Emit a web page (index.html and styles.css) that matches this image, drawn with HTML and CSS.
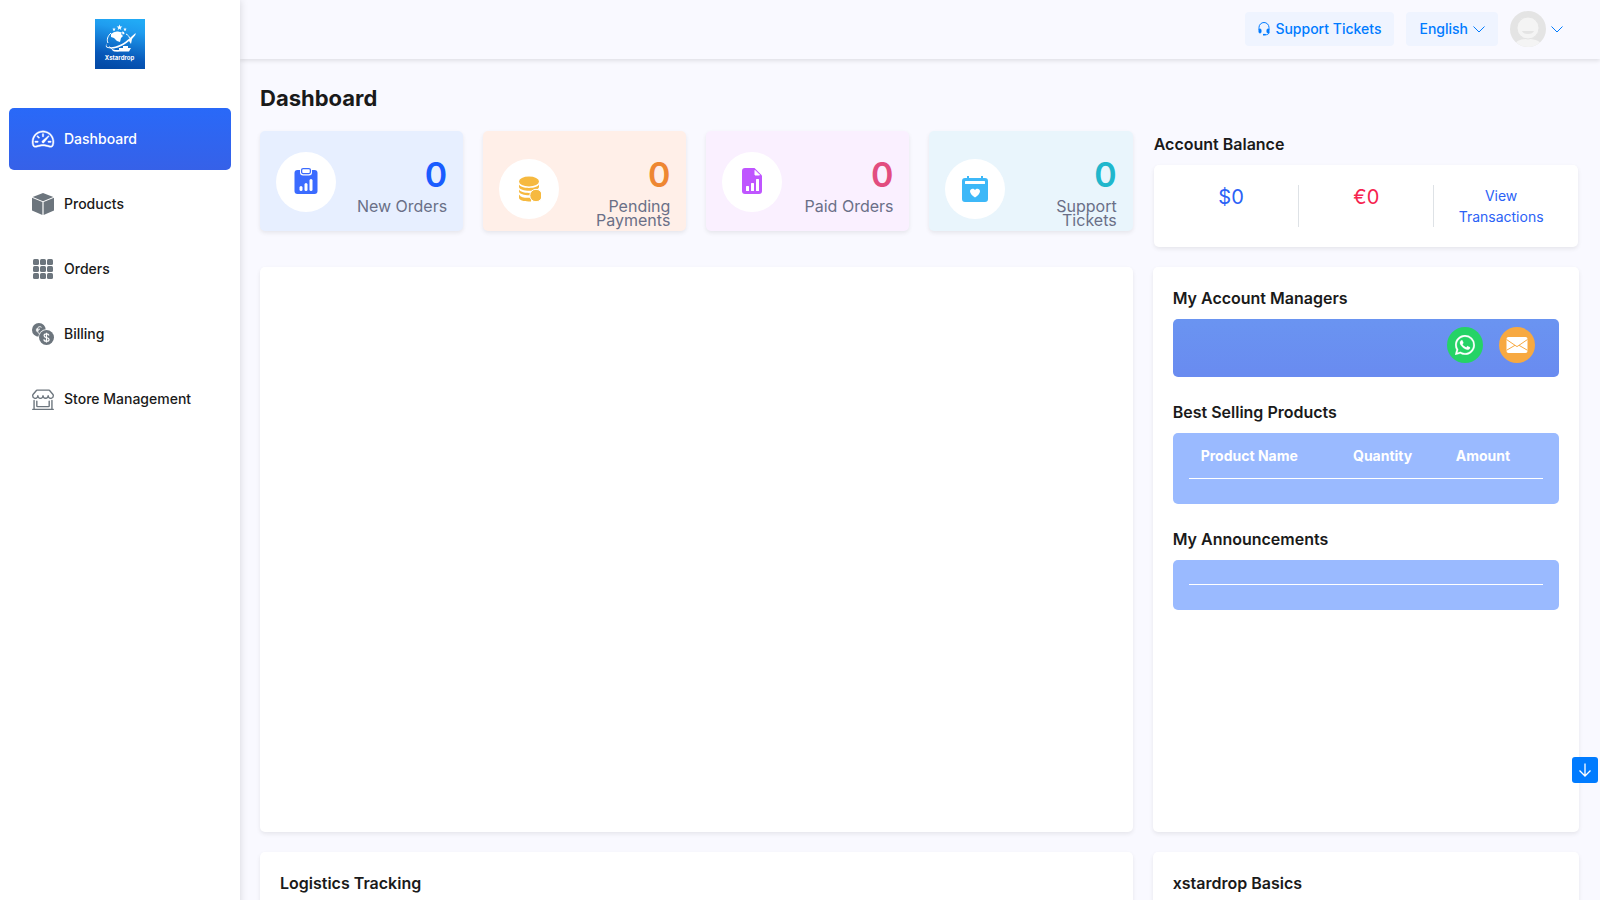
FILE: index.html
```html
<!DOCTYPE html>
<html lang="en">

<head>
    <meta charset="UTF-8">
    <meta name="viewport" content="width=device-width, initial-scale=1.0">
    <title>Xstardrop - Dashboard</title>
    <link rel="stylesheet" href="styles.css">
</head>

<body>
    <aside class="sidebar">
        <a href="#" class="logo" aria-label="Xstardrop">
            <svg width="50" height="50" viewBox="0 0 50 50">
                <defs>
                    <linearGradient id="logo-bg" x1="0.6" y1="0" x2="0.4" y2="1">
                        <stop offset="0" stop-color="#21aaf5" />
                        <stop offset="0.2" stop-color="#1f9cef" />
                        <stop offset="0.75" stop-color="#0757b8" />
                        <stop offset="1" stop-color="#034aa6" />
                    </linearGradient>
                </defs>
                <rect width="50" height="50" fill="url(#logo-bg)" />
                <g fill="#fff">
                    <path d="M24.500 5.500l.8 2 2.100.1-1.700 1.300.6 2.100-1.800-1.200-1.800 1.200.6-2.100-1.700-1.300 2.100-.1z" />
                    <path d="M19 8.500l.5 1.200 1.300.1-1 .8.300 1.300-1.100-.7-1.100.7.300-1.300-1-.8 1.300-.1zM30 8.500l.5 1.200 1.300.1-1 .8.300 1.300-1.100-.7-1.100.7.300-1.300-1-.8 1.300-.1z" />
                    <path d="M16 15q3-3 7-2.500l4 1-1 1.500 2 2-2 2-1 4-3-1-3-3-3-1zM27 12.500l2 .5.500 2-2 .5z" />
                    <path d="M12 24c-2 4 1 5 6 4 7-1 14-6 18-10l4-3.500c1-.8.8.8 0 2l-3 3.500-1 5-2-3c-6 5-13 8-18 7.500-5-.2-6.500-2-4-5.500z" />
                    <path d="M24 29h4v-2h5v2h3l-2 3.500H19l-2-1.500h7z" />
                </g>
                <path d="M16 14c-3.500 3-4.500 7-3 10M14.500 27.500c2 3 5 4.500 9 4.500M31 15c2 1 3 2 3.500 4" fill="none" stroke="#fff" stroke-width="1" />
                <text x="24.500" y="41" text-anchor="middle" class="logo-text">Xstardrop</text>
            </svg>
        </a>
        <nav class="menu">
            <a href="#" class="menu-item active">
                <svg width="22" height="22" viewBox="0 0 16 16" fill="currentColor" fill-rule="evenodd" stroke="currentColor" stroke-width="0.300">
                    <path d="M8 4a.5.5 0 0 1 .5.5V6a.5.5 0 0 1-1 0V4.500A.5.5 0 0 1 8 4zM3.732 5.732a.5.5 0 0 1 .707 0l.915.914a.5.5 0 1 1-.708.708l-.914-.915a.5.5 0 0 1 0-.707zM2 10a.5.5 0 0 1 .5-.5h1.586a.5.5 0 0 1 0 1H2.500A.5.5 0 0 1 2 10zm9.500 0a.5.5 0 0 1 .5-.5h1.500a.5.5 0 0 1 0 1H12a.5.5 0 0 1-.5-.5zm.754-4.246a.389.389 0 0 0-.527-.02L7.547 9.310a.91.91 0 1 0 1.302 1.258l3.434-4.297a.389.389 0 0 0-.029-.518z" />
                    <path d="M0 10a8 8 0 1 1 15.547 2.661c-.442 1.253-1.845 1.602-2.932 1.250C11.309 13.488 9.475 13 8 13c-1.474 0-3.310.488-4.615.911-1.087.352-2.490.003-2.932-1.250A7.988 7.988 0 0 1 0 10zm8-7a7 7 0 0 0-6.603 9.329c.203.575.923.876 1.680.63C4.397 12.533 6.358 12 8 12s3.604.532 4.923.96c.757.245 1.477-.056 1.680-.631A7 7 0 0 0 8 3z" />
                </svg>
                Dashboard
            </a>
            <a href="#" class="menu-item">
                <svg width="22" height="22" viewBox="0 0 22 22" fill="currentColor">
                    <path d="M11 0L21.300 4 11 8.200.7 4z" />
                    <path d="M0 4.800L10.400 9v13L0 17.600zM22 4.800L11.600 9v13L22 17.600z" />
                </svg>
                Products
            </a>
            <a href="#" class="menu-item">
                <svg width="22" height="22" viewBox="0 0 22 22" fill="currentColor">
                    <rect x="1" y="1" width="6" height="6" rx="1.500" />
                    <rect x="8" y="1" width="6" height="6" rx="1.500" />
                    <rect x="15" y="1" width="6" height="6" rx="1.500" />
                    <rect x="1" y="8" width="6" height="6" rx="1.500" />
                    <rect x="8" y="8" width="6" height="6" rx="1.500" />
                    <rect x="15" y="8" width="6" height="6" rx="1.500" />
                    <rect x="1" y="15" width="6" height="6" rx="1.500" />
                    <rect x="8" y="15" width="6" height="6" rx="1.500" />
                    <rect x="15" y="15" width="6" height="6" rx="1.500" />
                </svg>
                Orders
            </a>
            <a href="#" class="menu-item">
                <svg width="22" height="22" viewBox="0 0 22 22">
                    <circle cx="6.900" cy="6.900" r="6.900" fill="currentColor" />
                    <path d="M9.500 4.300C7.500 2.900 5.300 4 5.100 7c.1 2 .8 3 2.200 3.200M3.900 6.200h4M3.900 7.800h3" fill="none" stroke="#fff" stroke-width="1" />
                    <circle cx="14.500" cy="14.500" r="8.300" fill="#fff" />
                    <circle cx="14.500" cy="14.500" r="7.500" fill="currentColor" />
                    <path d="M17 12.500c-.3-1.200-1.300-1.600-2.500-1.600-1.400 0-2.400.7-2.400 1.800 0 2.500 5 1.200 5 3.800 0 1.200-1.100 1.900-2.600 1.900-1.400 0-2.500-.6-2.700-2M14.500 9.700v9.800" fill="none" stroke="#fff" stroke-width="1.200" />
                </svg>
                Billing
            </a>
            <a href="#" class="menu-item">
                <svg width="22" height="22" viewBox="0 0 16 16" fill="currentColor">
                    <path d="M2.970 1.350A1 1 0 0 1 3.730 1h8.540a1 1 0 0 1 .76.35l2.609 3.044A1.500 1.500 0 0 1 16 5.370v.255a2.375 2.375 0 0 1-4.250 1.458A2.371 2.371 0 0 1 9.875 8 2.370 2.370 0 0 1 8 7.083 2.370 2.370 0 0 1 6.125 8a2.370 2.370 0 0 1-1.875-.917A2.375 2.375 0 0 1 0 5.625V5.370a1.500 1.500 0 0 1 .361-.976l2.610-3.045zm1.780 4.275a1.375 1.375 0 0 0 2.750 0 .5.5 0 0 1 1 0 1.375 1.375 0 0 0 2.750 0 .5.5 0 0 1 1 0 1.375 1.375 0 1 0 2.750 0V5.370a.5.5 0 0 0-.12-.325L12.270 2H3.730L1.120 5.045A.5.5 0 0 0 1 5.370v.255a1.375 1.375 0 0 0 2.750 0 .5.5 0 0 1 1 0zM1.500 8.500A.5.5 0 0 1 2 9v6h12V9a.5.5 0 0 1 1 0v6h.5a.5.5 0 0 1 0 1H.5a.5.5 0 0 1 0-1H1V9a.5.5 0 0 1 .5-.5zm2 .5a.5.5 0 0 1 .5.5V13h8V9.500a.5.5 0 0 1 1 0V13a1 1 0 0 1-1 1H4a1 1 0 0 1-1-1V9.500a.5.5 0 0 1 .5-.5z" />
                </svg>
                Store Management
            </a>
        </nav>
    </aside>

    <div class="page">
        <header class="topbar">
            <a href="#" class="top-btn">
                <svg width="12" height="14" viewBox="0 0 12 14" fill="none" stroke="currentColor">
                    <path d="M1 8V5.500a5 5 0 0 1 10 0V8M11 10c0 1.700-1 2.700-2.500 2.700H7" />
                    <rect x="1" y="7" width="2" height="4" rx="1" fill="currentColor" />
                    <rect x="9" y="7" width="2" height="4" rx="1" fill="currentColor" />
                    <path d="M5 12.700h2.500" stroke-width="1.600" />
                </svg>
                Support Tickets
            </a>
            <button type="button" class="top-btn">
                English
                <svg width="12" height="12" viewBox="0 0 12 12" fill="none" stroke="currentColor">
                    <path d="M.5 3.500L6 9l5.500-5.500" />
                </svg>
            </button>
            <button type="button" class="user-btn" aria-label="Account">
                <svg width="36" height="36" viewBox="0 0 36 36">
                    <defs>
                        <clipPath id="avatar-clip">
                            <circle cx="18" cy="18" r="18" />
                        </clipPath>
                    </defs>
                    <g clip-path="url(#avatar-clip)">
                        <rect width="36" height="36" fill="#e4e4e4" />
                        <path d="M4 36c1-6 6-8 14-8s13 2 14 8z" fill="#f4f4f4" />
                        <circle cx="18" cy="17" r="11" fill="#f4f4f4" stroke="#e4e4e4" />
                        <path d="M12 20h12c-1 4-11 4-12 0z" fill="#e4e4e4" />
                    </g>
                </svg>
                <svg width="12" height="12" viewBox="0 0 12 12" fill="none" stroke="currentColor">
                    <path d="M.5 3.500L6 9l5.500-5.500" />
                </svg>
            </button>
        </header>

        <main class="content">
            <h1>Dashboard</h1>
            <div class="grid">
                <section class="stats">
                    <a href="#" class="stat stat-new">
                        <span class="stat-icon">
                            <svg width="26" height="30" viewBox="0 0 26 30">
                                <rect x="1.500" y="3" width="23" height="24" rx="3" fill="#3b6bff" />
                                <rect x="7" y="0" width="12" height="8.500" rx="3" fill="#fff" />
                                <rect x="8.600" y="1.600" width="8.800" height="5" rx="1.500" fill="none" stroke="#3b6bff" stroke-width="1.300" />
                                <g fill="#fff">
                                    <rect x="6.500" y="19" width="3" height="5" rx="1.500" />
                                    <rect x="11.500" y="16" width="3" height="8" rx="1.500" />
                                    <rect x="16.500" y="12" width="3" height="12" rx="1.500" />
                                </g>
                            </svg>
                        </span>
                        <span class="stat-text">
                            <span class="stat-number">0</span>
                            <span class="stat-label">New Orders</span>
                        </span>
                    </a>
                    <a href="#" class="stat stat-pending">
                        <span class="stat-icon">
                            <svg width="24" height="26" viewBox="0 0 24 26" fill="#f6b93f">
                                <ellipse cx="12" cy="5.500" rx="10" ry="5" />
                                <path d="M2 8.500c2 4.500 18 4.500 20 0v2.500c-1 5-19 5-20 0z" />
                                <path d="M2 13.500c2 4.500 18 4.500 20 0v2c-1 5-19 5-20 0z" />
                                <path d="M2 18.500c2 3.500 7 3.500 12 3.200v3.800c-6 0-12-.5-12-4z" />
                                <circle cx="19" cy="19.500" r="6.200" stroke="#fff" />
                            </svg>
                        </span>
                        <span class="stat-text">
                            <span class="stat-number">0</span>
                            <span class="stat-label">Pending Payments</span>
                        </span>
                    </a>
                    <a href="#" class="stat stat-paid">
                        <span class="stat-icon">
                            <svg width="20" height="28" viewBox="0 0 20 28">
                                <path d="M3 0h9.500L20 7.500V23a3 3 0 0 1-3 3H3a3 3 0 0 1-3-3V3a3 3 0 0 1 3-3z" fill="#bf55ff" />
                                <path d="M13 2.500V7h4.500z" fill="#fff" stroke="#fff" stroke-linejoin="round" />
                                <g fill="#fff">
                                    <rect x="4" y="18" width="3" height="5" rx="0.500" />
                                    <rect x="9" y="15" width="3" height="8" rx="0.500" />
                                    <rect x="14" y="11" width="3" height="12" rx="0.500" />
                                </g>
                            </svg>
                        </span>
                        <span class="stat-text">
                            <span class="stat-number">0</span>
                            <span class="stat-label">Paid Orders</span>
                        </span>
                    </a>
                    <a href="#" class="stat stat-support">
                        <span class="stat-icon">
                            <svg width="26" height="28" viewBox="0 0 26 28">
                                <path d="M5 1h2v2h12V1h2v2h2a3 3 0 0 1 3 3v18a3 3 0 0 1-3 3H3a3 3 0 0 1-3-3V6a3 3 0 0 1 3-3h2z" fill="#3db8f8" />
                                <rect x="3" y="6" width="20" height="3" rx="0.500" fill="#fff" />
                                <path d="M13 22.500c-3-2-5-4-5-6.200 0-3 3.700-3.400 5-1.300 1.300-2.100 5-1.700 5 1.300 0 2.200-2 4.200-5 6.200z" fill="#fff" />
                            </svg>
                        </span>
                        <span class="stat-text">
                            <span class="stat-number">0</span>
                            <span class="stat-label">Support Tickets</span>
                        </span>
                    </a>
                </section>

                <section class="balance">
                    <h2>Account Balance</h2>
                    <div class="balance-card">
                        <div class="balance-cell usd">$0</div>
                        <div class="balance-cell eur">€0</div>
                        <div class="balance-cell"><a href="#">View Transactions</a></div>
                    </div>
                </section>

                <section class="card chart-card"></section>

                <section class="card side-card">
                    <h2>My Account Managers</h2>
                    <div class="manager-box">
                        <a href="#" class="round-btn whatsapp" aria-label="WhatsApp">
                            <svg width="20" height="20" viewBox="0 0 16 16" fill="currentColor" stroke="currentColor" stroke-width="0.200">
                                <path d="M13.601 2.326A7.854 7.854 0 0 0 7.994 0C3.627 0 .068 3.558.064 7.926c0 1.399.366 2.760 1.057 3.965L0 16l4.204-1.102a7.933 7.933 0 0 0 3.790.965h.004c4.368 0 7.926-3.558 7.930-7.930A7.898 7.898 0 0 0 13.600 2.326zM7.994 14.521a6.573 6.573 0 0 1-3.356-.92l-.24-.144-2.494.654.666-2.433-.156-.251a6.560 6.560 0 0 1-1.007-3.505c0-3.626 2.957-6.584 6.591-6.584a6.560 6.560 0 0 1 4.660 1.931 6.557 6.557 0 0 1 1.928 4.660c-.004 3.639-2.961 6.592-6.592 6.592zm3.615-4.934c-.197-.099-1.170-.578-1.353-.646-.182-.065-.315-.099-.445.099-.133.197-.513.646-.627.775-.114.133-.232.148-.43.05-.197-.1-.836-.308-1.592-.985-.59-.525-.985-1.175-1.103-1.372-.114-.198-.011-.304.088-.403.087-.088.197-.232.296-.346.1-.114.133-.198.198-.33.065-.134.034-.248-.015-.347-.05-.099-.445-1.076-.612-1.470-.16-.389-.323-.335-.445-.34-.114-.007-.247-.007-.38-.007a.729.729 0 0 0-.529.247c-.182.198-.691.677-.691 1.654 0 .977.71 1.916.81 2.049.098.133 1.394 2.132 3.383 2.992.47.205.84.326 1.129.418.475.152.904.129 1.246.08.38-.058 1.171-.48 1.338-.943.164-.464.164-.86.114-.943-.049-.084-.182-.133-.38-.232z" />
                            </svg>
                        </a>
                        <a href="#" class="round-btn mail" aria-label="E-mail">
                            <svg width="22" height="16" viewBox="0 0 22 16">
                                <rect x="0.500" width="21" height="16" rx="2" fill="#fff" />
                                <path d="M.5 2.500L9 8.300.5 13.300M21.500 2.500L13 8.300l8.500 5M9 8.300l2 1.300 2-1.300" fill="none" stroke="#f7a941" stroke-width="1" />
                            </svg>
                        </a>
                    </div>

                    <h2>Best Selling Products</h2>
                    <div class="light-box">
                        <table>
                            <thead>
                                <tr>
                                    <th class="col-name">Product Name</th>
                                    <th class="col-qty">Quantity</th>
                                    <th class="col-amount">Amount</th>
                                </tr>
                            </thead>
                            <tbody></tbody>
                        </table>
                    </div>

                    <h2>My Announcements</h2>
                    <div class="light-box">
                        <div class="announcements"></div>
                    </div>
                </section>

                <section class="card bottom-left">
                    <h2>Logistics Tracking</h2>
                </section>
                <section class="card bottom-right">
                    <h2>xstardrop Basics</h2>
                </section>
            </div>
        </main>
    </div>

    <button type="button" class="scroll-btn" aria-label="Scroll down">
        <svg width="14" height="14" viewBox="0 0 14 14" fill="none" stroke="currentColor" stroke-width="1.300">
            <path d="M7 .5V13M1.500 7.500L7 13l5.500-5.500" />
        </svg>
    </button>
</body>

</html>
```

FILE: styles.css
```css
* {
    box-sizing: border-box;
}

body {
    display: flex;
    min-height: 100vh;
    margin: 0;
    background-color: #f9f9ff;
    font-family: Inter, "Liberation Sans", sans-serif;
    font-size: 14px;
    line-height: 21px;
    color: #1a1a1a;
}

a {
    text-decoration: none;
}

button {
    border: none;
    padding: 0;
    font: inherit;
    cursor: pointer;
}

h1 {
    margin: 0 0 16px;
    font-size: 22px;
    line-height: 34px;
    font-weight: 700;
}

h2 {
    margin: 0 0 10px;
    font-size: 16px;
    line-height: 22px;
    font-weight: 600;
}

/* sidebar */
.sidebar {
    flex: 0 0 240px;
    padding: 19px 9px;
    background-color: #fff;
    box-shadow: 0 0 8px rgba(0, 0, 0, 0.15);
    z-index: 2;
}

.logo {
    display: flex;
    justify-content: center;
    margin-bottom: 39px;
}

.logo-text {
    font-size: 6px;
    font-weight: 700;
    fill: #fff;
}

.menu {
    display: flex;
    flex-direction: column;
    gap: 3px;
}

.menu-item {
    display: flex;
    align-items: center;
    gap: 10px;
    height: 62px;
    padding: 0 23px;
    border-radius: 5px;
    font-weight: 500;
    line-height: 22px;
    color: #1a1a1a;
}

.menu-item svg {
    color: #6c757d;
}

.menu-item.active {
    background: linear-gradient(#2969f8, #3661e8);
    color: #fff;
}

.menu-item.active svg {
    color: #fff;
    overflow: visible;
}

/* top bar */
.page {
    flex: 1;
    min-width: 0;
}

.topbar {
    display: flex;
    justify-content: flex-end;
    align-items: center;
    gap: 12px;
    height: 59px;
    padding: 0 37px 1px;
    box-shadow: 0 2px 4px rgba(0, 0, 0, 0.1);
}

.top-btn {
    display: flex;
    align-items: center;
    gap: 5px;
    height: 34px;
    padding: 0 13px;
    border-radius: 4px;
    background-color: #eff4ff;
    font-weight: 500;
    line-height: 20px;
    color: #007bff;
}

.user-btn {
    display: flex;
    align-items: center;
    gap: 5px;
    background: none;
    color: #007bff;
}

/* content */
.content {
    padding: 22px 21px 20px 20px;
}

.grid {
    display: grid;
    grid-template-columns: repeat(12, minmax(0, 1fr));
    column-gap: 20px;
}

.stats {
    grid-column: span 8;
    display: grid;
    grid-template-columns: repeat(4, minmax(0, 1fr));
    gap: 20px;
    align-items: start;
}

.stat {
    display: grid;
    grid-template-columns: 60px 1fr;
    align-content: start;
    align-items: center;
    min-height: 100px;
    padding: 20px 16px 0;
    border-radius: 5px;
    box-shadow: 0 2px 4px rgba(0, 0, 0, 0.08);
}

.stat-icon {
    display: flex;
    align-items: center;
    justify-content: center;
    height: 60px;
    border-radius: 50%;
    background-color: #fff;
}

.stat-text {
    text-align: right;
}

.stat-number {
    display: block;
    font-size: 34px;
    line-height: 48px;
    font-weight: 600;
}

.stat-label {
    display: block;
    font-size: 16px;
    line-height: 14px;
    color: #6a6f87;
}

.stat-new {
    background-color: #e7efff;
}

.stat-new .stat-number {
    color: #1a5cff;
}

.stat-pending {
    background-color: #ffefe8;
}

.stat-pending .stat-number {
    color: #ee8732;
}

.stat-paid {
    background-color: #faf0ff;
}

.stat-paid .stat-number {
    color: #e24d7f;
}

.stat-support {
    background-color: #e9f5fc;
}

.stat-support .stat-number {
    color: #20b7cc;
}

.balance {
    grid-column: span 4;
    padding: 2px 1px 20px;
}

.balance-card {
    display: grid;
    grid-template-columns: repeat(3, minmax(0, 1fr));
    padding: 20px 10px;
    border-radius: 5px;
    background-color: #fff;
    box-shadow: 0 2px 4px rgba(0, 0, 0, 0.08);
}

.balance-cell {
    padding: 0 10px;
    text-align: center;
}

.balance-cell + .balance-cell {
    border-left: 1px solid #dee2e6;
}

.balance-cell a {
    color: #2b62f6;
}

.usd,
.eur {
    font-size: 20px;
    line-height: 24px;
}

.usd {
    color: #2b62f6;
}

.eur {
    color: #f6244f;
}

/* cards */
.card {
    padding: 20px;
    margin-bottom: 20px;
    border-radius: 5px;
    background-color: #fff;
    box-shadow: 0 2px 4px rgba(0, 0, 0, 0.08);
}

.chart-card {
    grid-column: span 8;
    min-height: 565px;
}

.side-card {
    grid-column: span 4;
}

.bottom-left {
    grid-column: span 8;
    min-height: 300px;
}

.bottom-right {
    grid-column: span 4;
}

.manager-box {
    display: flex;
    justify-content: flex-end;
    gap: 16px;
    min-height: 58px;
    padding: 8px 24px;
    margin-bottom: 24px;
    border-radius: 5px;
    background: linear-gradient(#6a94f1, #698bf0);
}

.round-btn {
    display: flex;
    align-items: center;
    justify-content: center;
    width: 36px;
    height: 36px;
    border-radius: 50%;
    color: #fff;
}

.whatsapp {
    background-color: #25d366;
}

.mail {
    background-color: #f7a941;
}

.light-box {
    padding: 0 16px 25px;
    margin-bottom: 24px;
    border-radius: 5px;
    background-color: #9abaff;
}

table {
    width: 100%;
    border-collapse: separate;
    border-spacing: 0;
}

th {
    padding: 12px;
    border-bottom: 1px solid #fff;
    text-align: left;
    font-weight: 700;
    color: #fff;
}

.col-name {
    width: 43%;
}

.col-qty {
    width: 29%;
}

.announcements {
    min-height: 25px;
    border-bottom: 1px solid #fff;
}

.scroll-btn {
    position: fixed;
    right: 2px;
    bottom: 117px;
    display: flex;
    align-items: center;
    justify-content: center;
    width: 26px;
    height: 26px;
    border-radius: 3px;
    background-color: #007bff;
    color: #fff;
}
```
